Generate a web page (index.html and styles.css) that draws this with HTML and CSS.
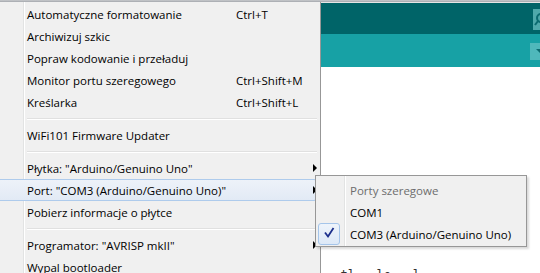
FILE: index.html
```html
<!DOCTYPE html>
<html lang="pl">
<head>
<meta charset="utf-8">
<title>Narzędzia</title>
<link rel="stylesheet" href="styles.css">
</head>
<body>
<div class="window">
  <div class="topline"></div>
  <div class="toolbar">
    <span class="tb-btn serial">
      <svg width="9" height="21" viewBox="0 0 9 21"><circle cx="8" cy="9" r="4" fill="none" stroke="#0b6b70" stroke-width="2"/><path d="M5 12 L2 16" stroke="#0b6b70" stroke-width="2"/></svg>
    </span>
  </div>
  <div class="tabs">
    <span class="tab-menu"><span class="down"></span></span>
  </div>
  <div class="editor">
    <div class="code">  tl.  le   l.</div>
  </div>
</div>

<div class="menu">
  <div class="item"><span class="label">Automatyczne formatowanie</span><span class="key">Ctrl+T</span></div>
  <div class="item"><span class="label">Archiwizuj szkic</span></div>
  <div class="item"><span class="label">Popraw kodowanie i przeładuj</span></div>
  <div class="item"><span class="label">Monitor portu szeregowego</span><span class="key">Ctrl+Shift+M</span></div>
  <div class="item"><span class="label">Kreślarka</span><span class="key">Ctrl+Shift+L</span></div>
  <div class="sep"></div>
  <div class="item"><span class="label">WiFi101 Firmware Updater</span></div>
  <div class="sep"></div>
  <div class="item sub"><span class="label">Płytka: "Arduino/Genuino Uno"</span><span class="arrow"></span></div>
  <div class="item sub active"><span class="label">Port: "COM3 (Arduino/Genuino Uno)"</span><span class="arrow"></span></div>
  <div class="item"><span class="label">Pobierz informacje o płytce</span></div>
  <div class="sep"></div>
  <div class="item sub"><span class="label">Programator: "AVRISP mkII"</span><span class="arrow"></span></div>
  <div class="item"><span class="label">Wypal bootloader</span></div>
</div>

<div class="submenu">
  <div class="sitem disabled"><span class="check"></span><span class="label">Porty szeregowe</span></div>
  <div class="sitem"><span class="check"></span><span class="label">COM1</span></div>
  <div class="sitem"><span class="check on"><svg width="22" height="22" viewBox="0 0 22 22"><path d="M7 9.5 L10 13.5 L15.5 5" fill="none" stroke="#1c2f8c" stroke-width="1.8"/></svg></span><span class="label">COM3 (Arduino/Genuino Uno)</span></div>
</div>
</body>
</html>
```

FILE: styles.css
```css
html, body {
  margin: 0;
  padding: 0;
  width: 540px;
  height: 273px;
  overflow: hidden;
  background: #fff;
  font-family: "Open Sans", "Noto Sans", sans-serif;
  font-size: 11.5px;
}

.window {
  position: relative;
  width: 540px;
  height: 273px;
  display: flex;
  flex-direction: column;
}

.topline {
  height: 3px;
  background: linear-gradient(#c9cbce 0, #a4a7ad 2px, #e6e6e6 2px);
  flex: none;
}

.toolbar {
  height: 31px;
  background: #006468;
  flex: none;
  display: flex;
  justify-content: flex-end;
  align-items: flex-start;
}

.tb-btn.serial {
  margin-top: 6px;
  width: 7px;
  height: 21px;
  background: #4fa9ab;
  overflow: hidden;
  display: block;
}

.tabs {
  height: 33px;
  background: #17a1a5;
  flex: none;
  display: flex;
  justify-content: flex-end;
  align-items: flex-start;
}

.tab-menu {
  margin-top: 9px;
  width: 10px;
  height: 17px;
  background: #4fb8bb;
  display: flex;
  align-items: center;
  justify-content: flex-end;
}

.down {
  width: 0;
  height: 0;
  border-top: 5px solid #0b6b70;
  border-left: 5px solid transparent;
  margin-right: -1px;
}

.editor {
  flex: 1;
  background: #fff;
  position: relative;
  overflow: hidden;
}

.code {
  margin: 201px 0 0 326px;
  font-family: "DejaVu Sans Mono", monospace;
  font-size: 12px;
  line-height: 14px;
  color: #333;
  white-space: pre;
}

/* main dropdown menu */
.menu {
  position: absolute;
  left: 0;
  top: 2px;
  width: 321px;
  height: 271px;
  overflow: hidden;
  background: #f0f0f0;
  border-right: 1px solid #979797;
  padding-top: 1px;
  box-sizing: border-box;
  background-image: linear-gradient(90deg, transparent 23px, #e2e3e3 23px, #e2e3e3 24px, #fff 24px, #fff 25px, transparent 25px);
}

.item {
  height: 22px;
  display: flex;
  align-items: center;
  padding-left: 27px;
  position: relative;
  color: #000;
  white-space: nowrap;
}

.item .label {
  width: 209px;
}

.item .key {
  flex: none;
}

.item.active {
  margin: 0 3px 0 0;
  height: 20px;
  border-top: 1px solid #aecbec;
  border-bottom: 1px solid #aecbec;
  border-right: 1px solid #aecbec;
  border-radius: 0 3px 3px 0;
  background: linear-gradient(#edf2f9, #e2eaf5);
}

.arrow {
  position: absolute;
  left: 313px;
  top: 7px;
  width: 0;
  height: 0;
  border-left: 4px solid #000;
  border-top: 4px solid transparent;
  border-bottom: 4px solid transparent;
}

.item.active .arrow {
  top: 6px;
}

.sep {
  height: 11px;
  margin-left: 27px;
  margin-right: 3px;
  background: linear-gradient(transparent 5px, #e0e0e0 5px, #e0e0e0 6px, #fff 6px, #fff 7px, transparent 7px);
}

/* submenu */
.submenu {
  position: absolute;
  left: 315px;
  top: 175px;
  width: 212px;
  height: 72px;
  box-sizing: border-box;
  background: #f0f0f0;
  border: 1px solid #979797;
  padding: 3px 2px 2px 2px;
  background-image: linear-gradient(90deg, transparent 28px, #e2e3e3 28px, #e2e3e3 29px, #fff 29px, #fff 30px, transparent 30px);
  box-shadow: 2px 2px 2px rgba(0,0,0,0.15);
}

.sitem {
  height: 22px;
  display: flex;
  align-items: center;
  white-space: nowrap;
  color: #000;
}

.sitem.disabled {
  color: #6d6d6d;
}

.check {
  width: 22px;
  height: 22px;
  margin-right: 10px;
  flex: none;
  box-sizing: border-box;
  display: block;
}

.check.on {
  border: 1px solid #a5c5ea;
  border-radius: 3px;
  background: linear-gradient(#eef4fb, #dde9f7);
}

.check.on svg {
  display: block;
  margin: -1px;
}
```
